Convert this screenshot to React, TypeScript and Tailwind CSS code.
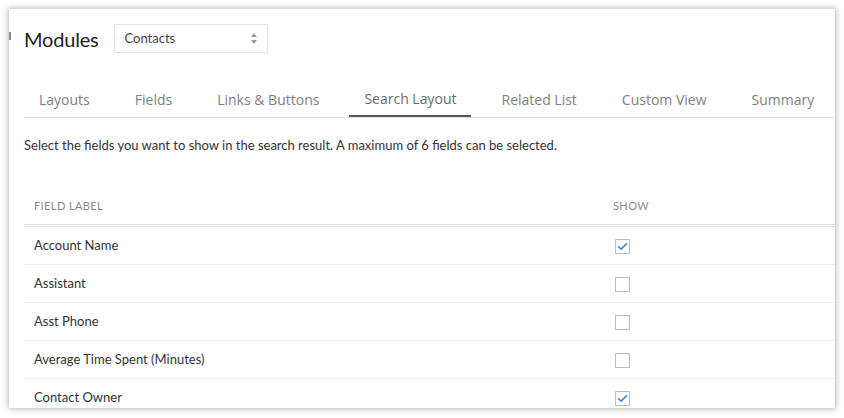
import React from 'react';

const tabs = ['Layouts', 'Fields', 'Links & Buttons', 'Search Layout', 'Related List', 'Custom View', 'Summary'];

const rows = [
    { label: 'Account Name', show: true },
    { label: 'Assistant', show: false },
    { label: 'Asst Phone', show: false },
    { label: 'Average Time Spent (Minutes)', show: false },
    { label: 'Contact Owner', show: true },
];

function Checkbox({ checked }: { checked: boolean }) {
    return (
        <span className="w-[15px] h-[15px] border border-[#bdbdbd] bg-white flex items-center justify-center">
            {checked && (
                <svg width="11" height="9" viewBox="0 0 11 9">
                    <path d="M1.5 4.8 L4.2 7.2 L9.6 1.6" fill="none" stroke="#3f8fe4" strokeWidth="1.7" strokeLinecap="round" strokeLinejoin="round" />
                </svg>
            )}
        </span>
    );
}

export default function App() {
    return (
        <div className="w-[844px] h-[418px] overflow-hidden bg-white p-[9px] font-['Lato','Liberation_Sans',sans-serif]">
            <div className="relative h-[399px] bg-white shadow-[0_0_6px_1px_rgba(0,0,0,0.28)] pl-[15px] pt-[15px] overflow-hidden">
                <span className="absolute left-0 top-[23px] w-[2px] h-[8px] bg-[#888]" />

                <div className="flex items-center gap-[15px] h-[29px]">
                    <h1 className="text-[20px] tracking-[-0.2px] text-[#222] leading-none">Modules</h1>
                    <div className="w-[154px] h-[29px] border border-[#e3e3e3] flex items-center justify-between pl-[10px] pr-[9px]">
                        <span className="text-[13px] text-[#444]">Contacts</span>
                        <svg width="8" height="13" viewBox="0 0 8 13">
                            <path d="M4 1 L7 5 L1 5 Z" fill="#9a9a9a" />
                            <path d="M4 12 L7 8 L1 8 Z" fill="#9a9a9a" />
                        </svg>
                    </div>
                </div>

                <div className="mt-[28px] flex border-b border-[#e2e2e2] font-['Open_Sans',sans-serif]">
                    {tabs.map((t, i) => (
                        <div key={t} className={`h-[36px] px-[15px] flex items-center text-[14px] whitespace-nowrap ${i > 0 ? 'ml-[15px]' : ''} ${t === 'Search Layout' ? 'text-[#6b6b6b] border-b-2 border-[#555] -mb-px' : 'text-[#808080]'}`}>
                            {t}
                        </div>
                    ))}
                </div>

                <p className="mt-[18px] text-[13px] leading-[18px] text-[#333]">
                    Select the fields you want to show in the search result. A maximum of 6 fields can be selected.
                </p>

                <div className="mt-[35px]">
                    <div className="flex h-[38px] items-center border-b-[3px] border-double border-[#dcdcdc] text-[11px] tracking-[0.4px] text-[#8a8a8a] uppercase">
                        <div className="w-[579px] pl-[10px]">Field Label</div>
                        <div className="pl-[10px]">Show</div>
                    </div>
                    {rows.map(r => (
                        <div key={r.label} className="flex h-[38px] items-center border-b border-[#f0f0f0] text-[13px] text-[#333]">
                            <div className="w-[579px] pl-[10px] pt-[1px]">{r.label}</div>
                            <div className="pl-[12px] pt-[1px]"><Checkbox checked={r.show} /></div>
                        </div>
                    ))}
                </div>
            </div>
        </div>
    );
}
